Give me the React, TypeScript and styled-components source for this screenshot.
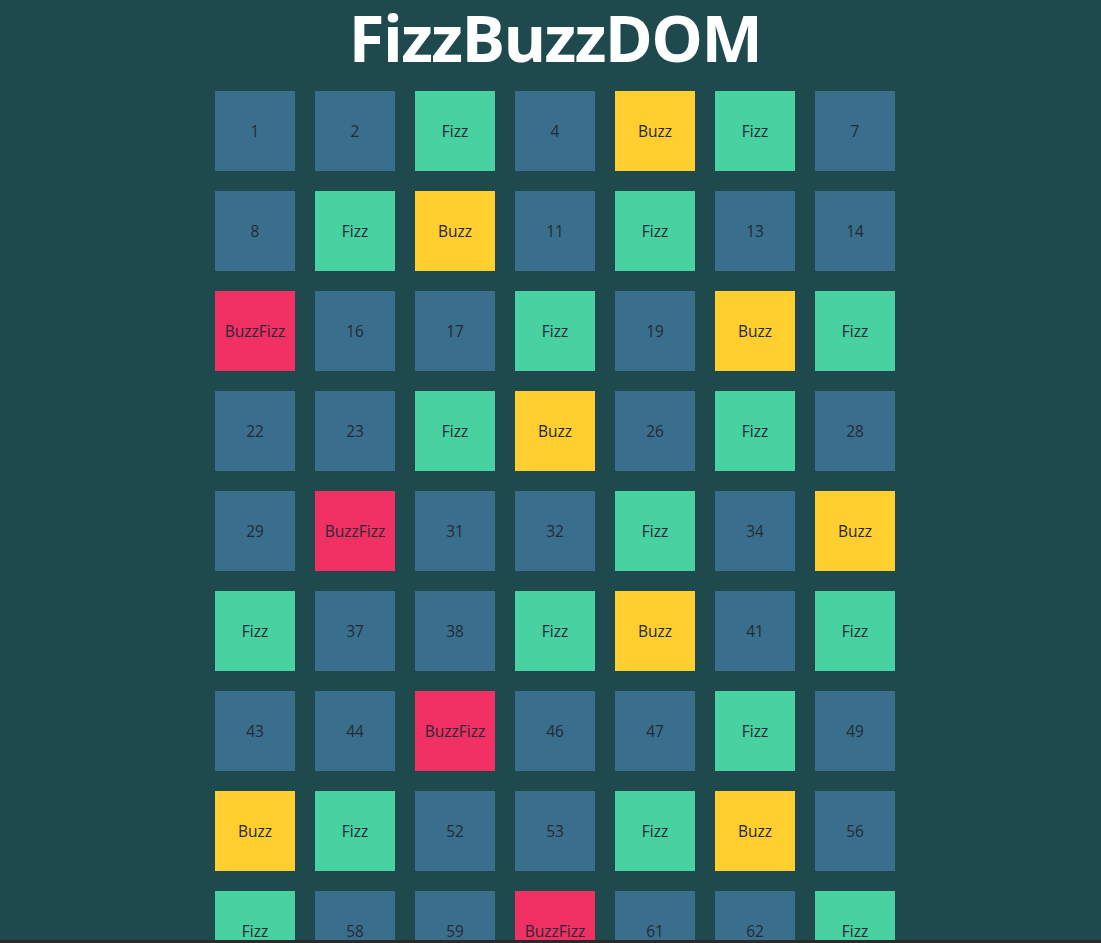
import React from "react";
import styled, { createGlobalStyle } from "styled-components";

const Global = createGlobalStyle`
  html, body {
    margin: 0;
    padding: 0;
    background: #1e4a4e;
  }
  body {
    font-family: "Open Sans", "Noto Sans", sans-serif;
  }
`;

const Page = styled.div`
  padding-left: 9px;
  display: flex;
  flex-direction: column;
  align-items: center;
`;

const Title = styled.h1`
  margin: 0;
  height: 91px;
  font-size: 65px;
  line-height: 74px;
  font-weight: 700;
  color: #ffffff;
  letter-spacing: -1.6px;
`;

const Grid = styled.div`
  display: grid;
  grid-template-columns: repeat(7, 80px);
  gap: 20px;
`;

type Kind = "num" | "fizz" | "buzz" | "both";

const colors: Record<Kind, string> = {
  num: "#396e8c",
  fizz: "#48d1a1",
  buzz: "#ffce2f",
  both: "#f13063",
};

const Tile = styled.div<{ $kind: Kind }>`
  width: 80px;
  height: 80px;
  display: flex;
  align-items: center;
  justify-content: center;
  background: ${(p) => colors[p.$kind]};
  color: #262a36;
  font-size: 15.5px;
  font-weight: 500;
  font-family: "Open Sans", "Noto Sans", sans-serif;
`;

const BottomEdge = styled.div`
  position: fixed;
  left: 0;
  right: 0;
  bottom: 0;
  height: 3px;
  background: #2a2a2a;
`;

function classify(n: number): [Kind, string] {
  const f = n % 3 === 0;
  const b = n % 5 === 0;
  if (f && b) return ["both", "BuzzFizz"];
  if (f) return ["fizz", "Fizz"];
  if (b) return ["buzz", "Buzz"];
  return ["num", String(n)];
}

export default function App() {
  const items = Array.from({ length: 100 }, (_, i) => i + 1);
  return (
    <>
      <Global />
      <Page>
        <Title>FizzBuzzDOM</Title>
        <Grid>
          {items.map((n) => {
            const [kind, label] = classify(n);
            return (
              <Tile key={n} $kind={kind}>
                {label}
              </Tile>
            );
          })}
        </Grid>
      </Page>
      <BottomEdge />
    </>
  );
}
